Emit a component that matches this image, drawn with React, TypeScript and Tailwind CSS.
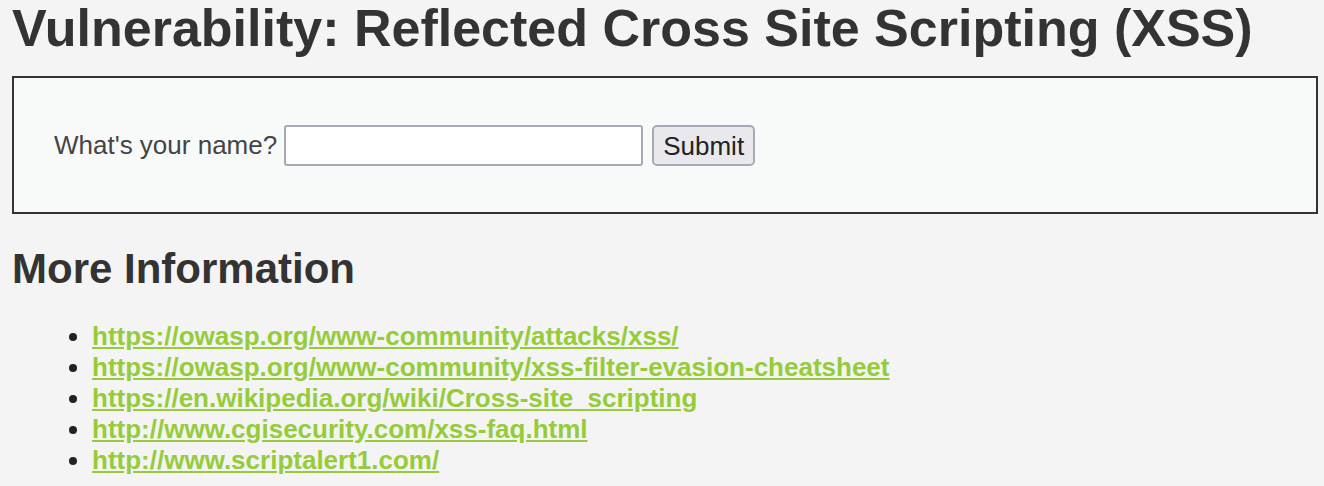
export default function App() {
  const links = [
    'https://owasp.org/www-community/attacks/xss/',
    'https://owasp.org/www-community/xss-filter-evasion-cheatsheet',
    'https://en.wikipedia.org/wiki/Cross-site_scripting',
    'http://www.cgisecurity.com/xss-faq.html',
    'http://www.scriptalert1.com/',
  ];

  return (
    <div className="min-h-[486px] bg-[#f4f4f4] text-[#333] font-['Liberation_Sans',Arial,sans-serif]">
      <h1 className="pl-[12px] text-[52px] font-bold leading-[56px]">
        Vulnerability: Reflected Cross Site Scripting (XSS)
      </h1>

      {/* form box */}
      <div className="mt-[20px] ml-[12px] mr-[6px] h-[138px] border-2 border-[#333] bg-[#f8f9f9] flex items-center pl-[40px]">
        <label className="text-[26px] text-[#444] mr-[7px]">What's your name?</label>
        <input
          type="text"
          className="w-[359px] h-[41px] bg-white border-2 border-[#a9a9b5] rounded-[3px] mr-[9px]"
        />
        <button className="h-[41px] w-[103px] text-[26px] text-[#222] bg-[#e9e9ed] border-2 border-[#a9a9b5] rounded-[5px]">
          Submit
        </button>
      </div>

      <h2 className="pl-[12px] mt-[31px] text-[42px] font-bold leading-[48px]">More Information</h2>

      <ul className="mt-[28px] pl-[92px] list-disc marker:text-[#222]">
        {links.map((l) => (
          <li key={l} className="text-[26px] leading-[31px]">
            <a href={l} className="font-bold text-[#96cc3a] underline">
              {l}
            </a>
          </li>
        ))}
      </ul>
    </div>
  );
}
